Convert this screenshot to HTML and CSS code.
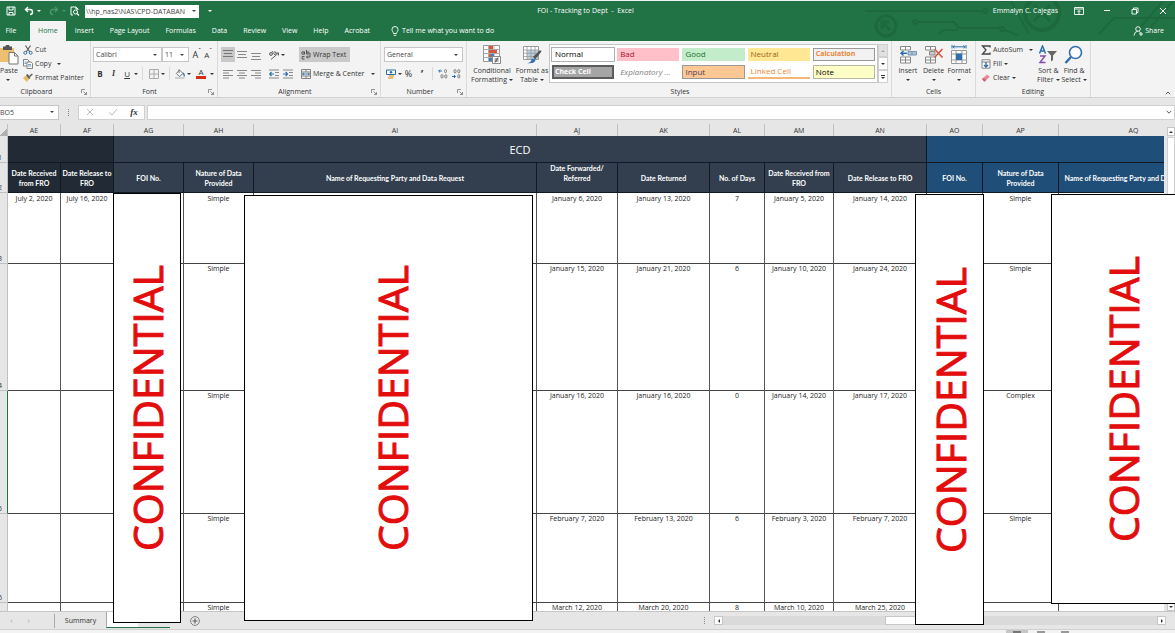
FILE: index.html
```html
<!DOCTYPE html>
<html lang="en">
<head>
    <meta charset="utf-8">
    <title>FOI - Tracking to Dept - Excel</title>
    <link rel="stylesheet" href="styles.css">
</head>
<body>
    <!-- icon set -->
    <svg class="defs" width="0" height="0">
        <symbol id="save" viewBox="0 0 10 10"><path d="M1 1h8v8H1z M3 1v3h4V1 M3 9V6.500h4V9" fill="none" stroke="#fff"/></symbol>
        <symbol id="undo" viewBox="0 0 10 10"><path d="M4 1L1.500 3.500 4 6 M2 3.500h4a2.500 2.500 0 0 1 0 5" fill="none" stroke="currentColor" stroke-width="1.400"/></symbol>
        <symbol id="redo" viewBox="0 0 10 10"><path d="M6 1l2.500 2.500L6 6 M8 3.500H4a2.500 2.500 0 0 0 0 5" fill="none" stroke="currentColor" stroke-width="1.400"/></symbol>
        <symbol id="preview" viewBox="0 0 10 10"><path d="M3 9H1V1h5l2 2v1 M6 1v2h2" fill="none" stroke="#fff"/><circle cx="5.500" cy="6" r="2" fill="none" stroke="#fff"/><path d="M7 7.500L9 9.500" stroke="#fff" stroke-width="1.300"/></symbol>
        <symbol id="launcher" viewBox="0 0 6 6"><path d="M.5 4V.5H4 M2.500 2.500l3 3 M5.500 3v2.500H3" fill="none" stroke="#777" stroke-width=".8"/></symbol>
        <symbol id="paste" viewBox="0 0 20 20"><path d="M0 3h14v14H0z" fill="#ecc06e"/><path d="M3 1.500h2.500a2 2 0 0 1 4 0H12V5H3z" fill="#555"/><path d="M9 7.500h5.500L18 11v8H9z" fill="#fff" stroke="#777"/><path d="M14.500 7.500V11H18" fill="none" stroke="#777"/></symbol>
        <symbol id="cut" viewBox="0 0 10 10"><path d="M2.500.5L6.800 7 M7.500.5L3.200 7" stroke="#555" stroke-width="1.100"/><circle cx="2.300" cy="7.800" r="1.500" fill="none" stroke="#3b78ad"/><circle cx="7.700" cy="7.800" r="1.500" fill="none" stroke="#3b78ad"/></symbol>
        <symbol id="copy" viewBox="0 0 10 10"><path d="M.5.5h4L6 2v5H.5z" fill="#fff" stroke="#666" stroke-width=".8"/><path d="M4 3h4l1.500 1.500v5H4z" fill="#fff" stroke="#666" stroke-width=".8"/><path d="M5 5.500h3M5 7h3.500M1.500 3h2M1.500 4.500h2" stroke="#3b78ad" stroke-width=".7"/></symbol>
        <symbol id="brush" viewBox="0 0 10 10"><path d="M0 5l3-2.500L6 6 4 9z" fill="#eab85f"/><path d="M3 2l1.500-1L7.500 5 6 6z" fill="#555"/><path d="M6 3L9 .5l.8 1L7 4z" fill="#555"/></symbol>
        <symbol id="grid" viewBox="0 0 10 10"><path d="M.5.5h9v9h-9zM5 .5v9M.5 5h9" fill="none" stroke="#aaa"/></symbol>
        <symbol id="bucket" viewBox="0 0 10 10"><path d="M4.500 1L8 4.500 4.500 7.500 1.300 4.500zM4 .3v4" fill="#fff" stroke="#666" stroke-width=".9"/><path d="M8 4q2 2 .8 3.500" fill="none" stroke="#3b78ad" stroke-width="1.300"/><path d="M0 9h9.500" stroke="#ccc" stroke-width="1.800"/></symbol>
        <symbol id="lines-top" viewBox="0 0 10 10"><path d="M0 .5h10M1 3.500h8M0 6.500h10" stroke="#777" fill="none"/></symbol>
        <symbol id="lines-mid" viewBox="0 0 10 10"><path d="M0 1.500h10M1 4.500h8M0 7.500h10" stroke="#888" fill="none"/></symbol>
        <symbol id="lines-bot" viewBox="0 0 10 10"><path d="M0 3.500h10M1 6.500h8M0 9.500h10" stroke="#888" fill="none"/></symbol>
        <symbol id="al-left" viewBox="0 0 10 10"><path d="M0 1.500h10M0 4h6M0 6.500h10M0 9h6" stroke="#888"/></symbol>
        <symbol id="al-center" viewBox="0 0 10 10"><path d="M0 1.500h10M2 4h6M0 6.500h10M2 9h6" stroke="#888"/></symbol>
        <symbol id="al-right" viewBox="0 0 10 10"><path d="M0 1.500h10M4 4h6M0 6.500h10M4 9h6" stroke="#888"/></symbol>
        <symbol id="orient" viewBox="0 0 10 10"><circle cx="2" cy="4" r="1.400" fill="none" stroke="#555"/><path d="M3 1l3 4M5 2q2-1 2 1.500L5.500 5M2 9.500L9.500 3M7 3h2.500v2.500" fill="none" stroke="#555" stroke-width=".9"/></symbol>
        <symbol id="outdent" viewBox="0 0 10 10"><path d="M0 1h10M6 3.500h4M6 6.500h4M0 9h10" stroke="#888"/><path d="M5 5H1M2.500 3L.7 5l1.800 2" fill="none" stroke="#2b6cab" stroke-width="1.200"/></symbol>
        <symbol id="indent" viewBox="0 0 10 10"><path d="M0 1h10M6 3.500h4M6 6.500h4M0 9h10" stroke="#888"/><path d="M0 5h4M2.700 3l1.800 2-1.800 2" fill="none" stroke="#2b6cab" stroke-width="1.200"/></symbol>
        <symbol id="wrap" viewBox="0 0 10 10"><circle cx="2" cy="3" r="1.300" fill="none" stroke="#555"/><path d="M3.500 1.500v3M5.500 0v4.300M3.500 6.500H1.200v2.500h2.300M9 3v4H5.500M7 5.500L5.500 7 7 8.500" fill="none" stroke="#555"/><circle cx="7" cy="3" r="1.200" fill="none" stroke="#555"/></symbol>
        <symbol id="merge" viewBox="0 0 10 10"><path d="M.5.5h9v9h-9zM.5 3h9M.5 7h9M5 .5V3M5 7v2.500" fill="none" stroke="#777" stroke-width=".9"/><path d="M1.500 5h7M3 4L1.500 5 3 6M7 4l1.500 1L7 6" fill="none" stroke="#2b6cab" stroke-width=".9"/></symbol>
        <symbol id="money" viewBox="0 0 10 10"><path d="M.5 1h9v4.500h-9z" fill="#fff" stroke="#2b6cab"/><circle cx="5" cy="3.200" r="1.200" fill="#2b6cab"/><path d="M3 7h5M2 9h5" stroke="#e4b050" stroke-width="1.600"/></symbol>
        <symbol id="dec-inc" viewBox="0 0 10 10"><path d="M4 2H.8M2 .6L.6 2 2 3.400" fill="none" stroke="#2b6cab"/><rect x="6.500" y=".6" width="2" height="3" rx="1" fill="none" stroke="#666" stroke-width=".8"/><rect x="3" y="5.700" width="2" height="3.300" rx="1" fill="none" stroke="#666" stroke-width=".8"/><rect x="6.800" y="5.700" width="2" height="3.300" rx="1" fill="none" stroke="#666" stroke-width=".8"/></symbol>
        <symbol id="dec-dec" viewBox="0 0 10 10"><path d="M1 7.500h3.500M3 6l1.500 1.500L3 9" fill="none" stroke="#2b6cab"/><rect x="3" y=".6" width="2" height="3.300" rx="1" fill="none" stroke="#666" stroke-width=".8"/><rect x="6.800" y=".6" width="2" height="3.300" rx="1" fill="none" stroke="#666" stroke-width=".8"/><rect x="6.800" y="5.700" width="2" height="3.300" rx="1" fill="none" stroke="#666" stroke-width=".8"/></symbol>
        <symbol id="cond" viewBox="0 0 20 20"><path d="M1.500.5h16v16h-16z" fill="#fff" stroke="#999"/><path d="M1.500 4.500h16M1.500 8.500h16M1.500 12.500h16M6.500.5v16M12 .5v16" stroke="#aaa" fill="none"/><path d="M7 1h4v3H7zM7 9h2v3H7z" fill="#d7553a"/><path d="M7 5h8v3H7z" fill="#d7553a"/><path d="M9 9h3v3H9zM7 13h3v3H7z" fill="#3f7fc0"/><path d="M10.500 11.500h8v7h-8z" fill="#fff" stroke="#888"/><path d="M12.500 14h4M12.500 16h4M16 12.500l-3 5" stroke="#444" fill="none" stroke-width=".9"/></symbol>
        <symbol id="fmt-table" viewBox="0 0 20 20"><path d="M1.500 1.500h15v13h-15z" fill="#fff" stroke="#999"/><path d="M5 5h11v9H5z" fill="#b9cfe4"/><path d="M1.500 5h15M1.500 8.300h15M1.500 11.500h15M5 1.500v13M9 1.500v13M13 1.500v13" stroke="#999" fill="none" stroke-width=".8"/><path d="M11 12l7-7 1.500 1.500-6.500 8z" fill="#555"/><path d="M5 18q4 0 5-4.500l3.500 1.500q-1 4-8.500 3z" fill="#2f6fae"/></symbol>
        <symbol id="ins-cells" viewBox="0 0 20 20"><path d="M2.500 1.500h10v3.500h-10zM7.500 1.500V5M2.500 12h10v6h-10zM2.500 15h10M7.500 12v6" fill="#fff" stroke="#888"/><path d="M10 6.500h8.500v3.500H10zM14 6.500V10" fill="#a9c3dc" stroke="#7a96b0"/><path d="M9 8.300H3M5.500 6L3 8.300l2.500 2.200" fill="none" stroke="#2b6cab" stroke-width="1.400"/></symbol>
        <symbol id="del-cells" viewBox="0 0 20 20"><path d="M1.500 1.500h10v3.500h-10zM6.500 1.500V5M1.500 12h10v6h-10zM1.500 15h10M6.500 12v6" fill="#fff" stroke="#888"/><path d="M5.500 6.500H11V10H5.500z" fill="#ccc" stroke="#888"/><path d="M10.500 4l8 8.500M18.500 4l-8 8.500" stroke="#d4553f" stroke-width="1.600"/></symbol>
        <symbol id="fmt-cells" viewBox="0 0 20 20"><path d="M3 0v3.500M17 0v3.500M4 1.800h12M5.500.3L4 1.800l1.500 1.500M14.500.3L16 1.800l-1.500 1.500" fill="none" stroke="#2b6cab"/><path d="M2.500 5.500h15v13h-15zM2.500 9h15M2.500 15h15M7 5.500v13M13 5.500v13" fill="#fff" stroke="#999"/><path d="M7 8.500h6V15H7z" fill="#2f6fae"/></symbol>
        <symbol id="sigma" viewBox="0 0 10 10"><path d="M9 2.500V1H1.500L5 5 1.500 9H9V7.500" fill="none" stroke="#444" stroke-width="1.300"/></symbol>
        <symbol id="fill" viewBox="0 0 10 10"><path d="M1 .8h8v8.400H1zM1 3h8" fill="#fff" stroke="#777" stroke-width=".9"/><path d="M5 3v5M3 6l2 2 2-2" fill="none" stroke="#2b6cab" stroke-width="1.300"/></symbol>
        <symbol id="eraser" viewBox="0 0 10 10"><path d="M1 6l5-4.500 2.800 2.300-5 4.700H3z" fill="#e8899a"/><path d="M1 6l1.500-1.300 2.800 2.400L3.800 8.500H3z" fill="#d0657c"/></symbol>
        <symbol id="sort" viewBox="0 0 20 20"><path d="M1.500 8.500L4.500 1l3 7.500M2.500 6h4" fill="none" stroke="#2f6fae" stroke-width="1.500"/><path d="M2 11h5l-5 6.500h5.500" fill="none" stroke="#8a4fae" stroke-width="1.500"/><path d="M9 6h10l-4 4.500V15l-2 1.500v-6z" fill="#666"/></symbol>
        <symbol id="find" viewBox="0 0 20 20"><circle cx="11.500" cy="7.500" r="6" fill="#fff" stroke="#2f6fae" stroke-width="1.600"/><path d="M7 12l-5.500 6" stroke="#2f6fae" stroke-width="2.400"/></symbol>
        <symbol id="bulb" viewBox="0 0 10 10"><path d="M3.500 7.500C3.500 6 2 5.500 2 3.500a3 3 0 0 1 6 0C8 5.500 6.500 6 6.500 7.500zM3.700 9.300h2.600" fill="none" stroke="#fff" stroke-width=".9"/></symbol>
        <symbol id="person" viewBox="0 0 10 10"><circle cx="5" cy="3" r="2.300" fill="none" stroke="#fff" stroke-width=".9"/><path d="M1 9.500q.5-4 3.500-4.300M6 5.500l1.500 1M6 8h4M8 6v4" fill="none" stroke="#fff" stroke-width=".9"/></symbol>
        <symbol id="ribbon-opt" viewBox="0 0 10 10"><path d="M.5 1.500h9v7h-9zM.5 3h9M5 8V4.500M3.500 6L5 4.500 6.500 6" fill="none" stroke="#fff" stroke-width=".9"/></symbol>
        <symbol id="minimize" viewBox="0 0 10 10"><path d="M2 4.500h6" stroke="#fff"/></symbol>
        <symbol id="restore" viewBox="0 0 10 10"><path d="M2 3.500h4.500V8H2zM3.500 3.500V2H8v4.500H6.500" fill="none" stroke="#fff" stroke-width=".9"/></symbol>
        <symbol id="close" viewBox="0 0 10 10"><path d="M2 2l6 6M8 2L2 8" stroke="#fff"/></symbol>
        <symbol id="cancel" viewBox="0 0 10 10"><path d="M2 2l6 6M8 2L2 8" stroke="#bbb"/></symbol>
        <symbol id="check" viewBox="0 0 10 10"><path d="M1 5.500L4 8l5-6" fill="none" stroke="#bbb"/></symbol>
        <symbol id="up" viewBox="0 0 6 6"><path d="M.8 4.200L3 2l2.200 2.200" fill="none" stroke="#555"/></symbol>
        <symbol id="down" viewBox="0 0 6 6"><path d="M.8 2L3 4.200 5.200 2" fill="none" stroke="#555"/></symbol>
        <symbol id="plus" viewBox="0 0 10 10"><circle cx="5" cy="5" r="4.400" fill="none" stroke="#777" stroke-width=".9"/><path d="M5 2.500v5M2.500 5h5" stroke="#666" stroke-width="1.200"/></symbol>
    </svg>

    <header class="title-area">
        <svg class="circuit" width="310" height="41" viewBox="0 0 310 41">
            <g fill="none" stroke="#1d693d" stroke-width="2">
                <circle cx="21" cy="25" r="10" stroke-width="3"/><path d="M25 29l-7-7M17 28v-7h7" stroke-width="3"/>
                <path d="M0 10h113l5 1"/><circle cx="120" cy="10" r="2"/><circle cx="50" cy="21" r="2"/><path d="M53 21h36l5 6h42"/><circle cx="137" cy="28" r="2"/>
                <path d="M74 33l4-4h15M139 29l14 5M134 0h12l18 33"/><circle cx="177" cy="12" r="17" stroke-width="4"/><path d="M169 4l16 16M185 4l-16 16" stroke-width="3"/>
                <path d="M234 33l15-16h61M274 28L298 0M284 28L308 0"/>
            </g>
        </svg>
        <div class="title-bar">
            <div class="quick-access">
                <button aria-label="Save"><svg class="ico"><use href="#save"/></svg></button>
                <button class="undo" aria-label="Undo"><svg class="ico"><use href="#undo"/></svg><i class="arrow"></i></button>
                <button class="redo" aria-label="Redo"><svg class="ico"><use href="#redo"/></svg><i class="arrow"></i></button>
                <button aria-label="Print preview"><svg class="ico"><use href="#preview"/></svg></button>
                <div class="combo path"><select aria-label="Document location"><option>\\hp_nas2\NAS\CPD-DATABAN</option></select><i class="arrow"></i></div>
                <button class="customize" aria-label="Customize toolbar"><i class="arrow"></i></button>
            </div>
            <div class="doc-title">FOI - Tracking to Dept &nbsp;-&nbsp; Excel</div>
            <div class="window-buttons">
                <span>Emmalyn C. Cajegas</span>
                <button aria-label="Ribbon display options"><svg class="ico"><use href="#ribbon-opt"/></svg></button>
                <button aria-label="Minimize"><svg class="ico"><use href="#minimize"/></svg></button>
                <button aria-label="Restore"><svg class="ico"><use href="#restore"/></svg></button>
                <button aria-label="Close"><svg class="ico"><use href="#close"/></svg></button>
            </div>
        </div>
        <nav class="tabs">
            <button class="file">File</button>
            <button class="active">Home</button>
            <button>Insert</button>
            <button>Page Layout</button>
            <button>Formulas</button>
            <button>Data</button>
            <button>Review</button>
            <button>View</button>
            <button>Help</button>
            <button>Acrobat</button>
            <button class="tell-me"><svg class="ico"><use href="#bulb"/></svg>Tell me what you want to do</button>
            <button class="share"><svg class="ico"><use href="#person"/></svg>Share</button>
        </nav>
    </header>

    <section class="ribbon">
        <div class="group clipboard">
            <div class="group-body">
                <button class="big"><svg class="ico-big"><use href="#paste"/></svg>Paste<i class="arrow"></i></button>
                <div class="stack">
                    <button><svg class="ico"><use href="#cut"/></svg>Cut</button>
                    <button><svg class="ico"><use href="#copy"/></svg>Copy<i class="arrow wide"></i></button>
                    <button><svg class="ico"><use href="#brush"/></svg>Format Painter</button>
                </div>
            </div>
            <div class="group-label">Clipboard<svg class="launcher"><use href="#launcher"/></svg></div>
        </div>
        <div class="group font">
            <div class="group-body rows">
                <div class="row">
                    <div class="combos">
                        <div class="combo family"><select aria-label="Font"><option>Calibri</option></select><i class="arrow"></i></div>
                        <div class="combo size"><select aria-label="Font size"><option>11</option></select><i class="arrow"></i></div>
                    </div>
                    <button class="tool grow" aria-label="Increase font size">A<sup>ˆ</sup></button>
                    <button class="tool shrink" aria-label="Decrease font size">A<sup>ˇ</sup></button>
                </div>
                <div class="row">
                    <button class="tool bold">B</button>
                    <button class="tool italic">I</button>
                    <button class="tool underline"><u>U</u></button>
                    <i class="arrow"></i>
                    <span class="sep"></span>
                    <button class="tool" aria-label="Borders"><svg class="ico"><use href="#grid"/></svg></button>
                    <i class="arrow"></i>
                    <span class="sep"></span>
                    <button class="tool" aria-label="Fill color"><svg class="ico"><use href="#bucket"/></svg></button>
                    <i class="arrow"></i>
                    <button class="tool font-color">A</button>
                    <i class="arrow"></i>
                </div>
            </div>
            <div class="group-label">Font<svg class="launcher"><use href="#launcher"/></svg></div>
        </div>
        <div class="group alignment">
            <div class="group-body">
                <div class="rows">
                    <div class="row">
                        <button class="tool pressed" aria-label="Top align"><svg class="ico"><use href="#lines-top"/></svg></button>
                        <button class="tool" aria-label="Middle align"><svg class="ico"><use href="#lines-mid"/></svg></button>
                        <button class="tool" aria-label="Bottom align"><svg class="ico"><use href="#lines-bot"/></svg></button>
                    </div>
                    <div class="row">
                        <button class="tool" aria-label="Align left"><svg class="ico"><use href="#al-left"/></svg></button>
                        <button class="tool" aria-label="Center"><svg class="ico"><use href="#al-center"/></svg></button>
                        <button class="tool" aria-label="Align right"><svg class="ico"><use href="#al-right"/></svg></button>
                    </div>
                </div>
                <span class="divider"></span>
                <div class="rows">
                    <div class="row">
                        <button class="tool" aria-label="Orientation"><svg class="ico"><use href="#orient"/></svg></button>
                        <i class="arrow"></i>
                    </div>
                    <div class="row">
                        <button class="tool" aria-label="Decrease indent"><svg class="ico"><use href="#outdent"/></svg></button>
                        <button class="tool" aria-label="Increase indent"><svg class="ico"><use href="#indent"/></svg></button>
                    </div>
                </div>
                <span class="divider"></span>
                <div class="rows">
                    <div class="row"><button class="labelled pressed"><svg class="ico"><use href="#wrap"/></svg>Wrap Text</button></div>
                    <div class="row"><button class="labelled"><svg class="ico"><use href="#merge"/></svg>Merge &amp; Center<i class="arrow"></i></button></div>
                </div>
            </div>
            <div class="group-label">Alignment<svg class="launcher"><use href="#launcher"/></svg></div>
        </div>
        <div class="group number">
            <div class="group-body rows">
                <div class="row">
                    <div class="combo format"><select aria-label="Number format"><option>General</option></select><i class="arrow"></i></div>
                </div>
                <div class="row">
                    <button class="tool" aria-label="Accounting format"><svg class="ico"><use href="#money"/></svg></button>
                    <i class="arrow"></i>
                    <button class="tool percent">%</button>
                    <button class="tool comma">’</button>
                    <span class="sep"></span>
                    <button class="tool" aria-label="Increase decimal"><svg class="ico"><use href="#dec-inc"/></svg></button>
                    <button class="tool" aria-label="Decrease decimal"><svg class="ico"><use href="#dec-dec"/></svg></button>
                </div>
            </div>
            <div class="group-label">Number<svg class="launcher"><use href="#launcher"/></svg></div>
        </div>
        <div class="group styles">
            <div class="group-body">
                <button class="big wide"><svg class="ico-big"><use href="#cond"/></svg>Conditional<span>Formatting<i class="arrow"></i></span></button>
                <button class="big wide"><svg class="ico-big"><use href="#fmt-table"/></svg>Format as<span>Table<i class="arrow"></i></span></button>
                <div class="gallery">
                    <button class="st normal">Normal</button>
                    <button class="st bad">Bad</button>
                    <button class="st good">Good</button>
                    <button class="st neutral">Neutral</button>
                    <button class="st calc">Calculation</button>
                    <button class="st check">Check Cell</button>
                    <button class="st explain">Explanatory ...</button>
                    <button class="st input">Input</button>
                    <button class="st linked">Linked Cell</button>
                    <button class="st note">Note</button>
                </div>
                <div class="gallery-scroll">
                    <button class="off" aria-label="Previous styles"><i class="arrow up"></i></button>
                    <button aria-label="Next styles"><i class="arrow"></i></button>
                    <button class="more" aria-label="More styles"><i class="arrow"></i></button>
                </div>
            </div>
            <div class="group-label">Styles</div>
        </div>
        <div class="group cells">
            <div class="group-body">
                <button class="big"><svg class="ico-big"><use href="#ins-cells"/></svg>Insert<i class="arrow"></i></button>
                <button class="big"><svg class="ico-big"><use href="#del-cells"/></svg>Delete<i class="arrow"></i></button>
                <button class="big"><svg class="ico-big"><use href="#fmt-cells"/></svg>Format<i class="arrow"></i></button>
            </div>
            <div class="group-label">Cells</div>
        </div>
        <div class="group editing">
            <div class="group-body">
                <div class="stack">
                    <button><svg class="ico"><use href="#sigma"/></svg>AutoSum<i class="arrow wide"></i></button>
                    <button><svg class="ico"><use href="#fill"/></svg>Fill<i class="arrow"></i></button>
                    <button><svg class="ico"><use href="#eraser"/></svg>Clear<i class="arrow"></i></button>
                </div>
                <button class="big"><svg class="ico-big"><use href="#sort"/></svg>Sort &amp;<span>Filter<i class="arrow"></i></span></button>
                <button class="big"><svg class="ico-big"><use href="#find"/></svg>Find &amp;<span>Select<i class="arrow"></i></span></button>
            </div>
            <div class="group-label">Editing</div>
        </div>
        <button class="collapse" aria-label="Collapse ribbon"><svg class="chev"><use href="#up"/></svg></button>
    </section>

    <section class="formula-bar">
        <div class="combo name-box"><input type="text" value="BO5" aria-label="Name box"><i class="arrow"></i></div>
        <span class="dots"></span>
        <div class="formula-tools">
            <button aria-label="Cancel"><svg class="ico"><use href="#cancel"/></svg></button>
            <button aria-label="Enter"><svg class="ico"><use href="#check"/></svg></button>
            <button class="fx">fx</button>
        </div>
        <div class="formula"><input type="text" aria-label="Formula"><svg class="chev"><use href="#down"/></svg></div>
    </section>

    <main class="workspace">
        <div class="sheet">
            <table>
                <colgroup>
                    <col class="c-row"><col class="c-ae"><col class="c-ae"><col class="c-ag"><col class="c-ag"><col class="c-ai"><col class="c-aj"><col class="c-ak"><col class="c-al"><col class="c-am"><col class="c-an"><col class="c-ao"><col class="c-ap"><col class="c-aq">
                </colgroup>
                <thead>
                    <tr class="letters"><th class="corner"></th><th>AE</th><th>AF</th><th>AG</th><th>AH</th><th>AI</th><th>AJ</th><th>AK</th><th>AL</th><th>AM</th><th>AN</th><th>AO</th><th>AP</th><th>AQ</th></tr>
                </thead>
                <tbody>
                    <tr class="r1">
                        <th>1</th>
                        <td class="dark" colspan="2"></td>
                        <td class="slate" colspan="8">ECD</td>
                        <td class="blue" colspan="3"></td>
                    </tr>
                    <tr class="r2">
                        <th>2</th>
                        <td class="dark">Date Received from FRO</td>
                        <td class="dark">Date Release to FRO</td>
                        <td class="slate">FOI No.</td>
                        <td class="slate">Nature of Data Provided</td>
                        <td class="slate">Name of Requesting Party and Data Request</td>
                        <td class="slate top">Date Forwarded/ Referred</td>
                        <td class="slate">Date Returned</td>
                        <td class="slate">No. of Days</td>
                        <td class="slate">Date Received from FRO</td>
                        <td class="slate">Date Release to FRO</td>
                        <td class="blue">FOI No.</td>
                        <td class="blue">Nature of Data Provided</td>
                        <td class="blue">Name of Requesting Party and Data Request</td>
                    </tr>
                    <tr class="r3"><th>3</th><td>July 2, 2020</td><td>July 16, 2020</td><td></td><td>Simple</td><td></td><td>January 6, 2020</td><td>January 13, 2020</td><td>7</td><td>January 5, 2020</td><td>January 14, 2020</td><td></td><td>Simple</td><td></td></tr>
                    <tr class="r4"><th>4</th><td></td><td></td><td></td><td>Simple</td><td></td><td>January 15, 2020</td><td>January 21, 2020</td><td>6</td><td>January 10, 2020</td><td>January 24, 2020</td><td></td><td>Simple</td><td></td></tr>
                    <tr class="r5"><th>5</th><td></td><td></td><td></td><td>Simple</td><td></td><td>January 16, 2020</td><td>January 16, 2020</td><td>0</td><td>January 14, 2020</td><td>January 17, 2020</td><td></td><td>Complex</td><td></td></tr>
                    <tr class="r6"><th>6</th><td></td><td></td><td></td><td>Simple</td><td></td><td>February 7, 2020</td><td>February 13, 2020</td><td>6</td><td>February 3, 2020</td><td>February 7, 2020</td><td></td><td>Simple</td><td></td></tr>
                    <tr class="r7"><th></th><td></td><td></td><td></td><td>Simple</td><td></td><td>March 12, 2020</td><td>March 20, 2020</td><td>8</td><td>March 10, 2020</td><td>March 25, 2020</td><td></td><td></td><td></td></tr>
                </tbody>
            </table>
        </div>
        <div class="v-scroll">
            <button aria-label="Scroll up"><i class="arrow up"></i></button>
            <div class="v-thumb"></div>
            <button aria-label="Scroll down"><i class="arrow"></i></button>
        </div>

        <!-- boxes drawn over the private columns -->
        <div class="cover cover-ag"><span>CONFIDENTIAL</span></div>
        <div class="cover cover-ai"><span>CONFIDENTIAL</span></div>
        <div class="cover cover-ao"><span>CONFIDENTIAL</span></div>
        <div class="cover cover-aq"><span>CONFIDENTIAL</span></div>
    </main>

    <footer>
        <div class="sheet-tabs">
            <button class="nav" aria-label="Previous sheet">‹</button>
            <button class="nav" aria-label="Next sheet">›</button>
            <button class="tab">Summary</button>
            <button class="tab current" aria-label="Current sheet"></button>
            <button class="add" aria-label="New sheet"><svg class="ico"><use href="#plus"/></svg></button>
            <span class="dots"></span>
            <div class="h-scroll">
                <button aria-label="Scroll left"><i class="arrow left"></i></button>
                <div class="h-track"><div class="h-thumb"></div></div>
                <button aria-label="Scroll right"><i class="arrow right"></i></button>
            </div>
        </div>
        <div class="status-bar">
            <span class="view on"></span>
            <span class="view"></span>
            <span class="view"></span>
        </div>
    </footer>
</body>
</html>
```

FILE: styles.css
```css
* {
    box-sizing: border-box;
}
body {
    margin: 0;
    height: 100vh;
    display: flex;
    flex-direction: column;
    overflow: hidden;
    background: #e6e6e6;
    color: #333;
    font: 7px/10px "Open Sans", "Noto Sans", sans-serif;
}
button, input, select {
    font: inherit;
    color: inherit;
    background: none;
    border: 0;
    margin: 0;
    padding: 0;
}
button {
    display: flex;
    align-items: center;
    justify-content: center;
    white-space: nowrap;
}
svg {
    display: block;
    flex: none;
}
.defs {
    position: absolute;
}
.ico {
    width: 10px;
    height: 10px;
}
.ico-big {
    width: 20px;
    height: 20px;
}
.chev {
    width: 6px;
    height: 6px;
}
.arrow {
    flex: none;
    width: 0;
    height: 0;
    border: 2px solid transparent;
    border-top-color: currentColor;
    border-bottom-width: 0;
}
.arrow.up {
    border: 2px solid transparent;
    border-bottom-color: currentColor;
    border-top-width: 0;
}
.arrow.left {
    border: 2px solid transparent;
    border-right-color: currentColor;
    border-left-width: 0;
}
.arrow.right {
    border: 2px solid transparent;
    border-left-color: currentColor;
    border-right-width: 0;
}

/* title and tabs */
.title-area {
    position: relative;
    flex: none;
    background: #217346;
    color: #fff;
    border-top: 1px solid #f3f3f3;
}
.circuit {
    position: absolute;
    right: 0;
    top: 0;
}
.title-bar {
    position: relative;
    display: grid;
    grid-template-columns: 1fr auto 1fr;
    align-items: center;
    height: 20px;
}
.doc-title {
    padding-right: 4px;
}
.quick-access {
    display: flex;
    align-items: center;
    padding-left: 6px;
}
.quick-access button {
    gap: 3px;
    margin-right: 8px;
}
.quick-access .redo {
    color: #4f9470;
    margin-right: 4px;
}
.quick-access .combo {
    margin-left: -3px;
}
.combo {
    display: flex;
    align-items: center;
    height: 15px;
    padding-right: 4px;
    background: #fff;
    border: 1px solid #c6c6c6;
    color: #444;
}
.combo select, .combo input {
    appearance: none;
    flex: 1;
    min-width: 0;
    height: 13px;
    padding-left: 2px;
    line-height: 13px;
    outline: none;
}
.combo.path {
    width: 114px;
    height: 13px;
    padding-right: 2px;
    border-color: #fff;
}
.combo.path select {
    padding-left: 0;
}
.quick-access .customize {
    margin-left: 9px;
}
.window-buttons {
    display: flex;
    align-items: center;
    justify-content: flex-end;
    gap: 18px;
    padding-right: 7px;
}
.window-buttons span {
    margin-right: -2px;
}
.tabs {
    position: relative;
    display: flex;
    height: 20px;
}
.tabs button {
    padding: 0 8px;
}
.tabs .file {
    width: 30px;
    padding: 0 8px 0 0;
}
.tabs .active {
    background: #f3f3f3;
    color: #217346;
    margin-right: 1px;
}
.tabs .tell-me {
    gap: 2px;
    padding-left: 12px;
}
.tabs .share {
    gap: 2px;
    margin-left: auto;
    padding-right: 11px;
}

/* ribbon */
.ribbon {
    display: flex;
    flex: none;
    position: relative;
    height: 57px;
    background: #f3f3f3;
    border-bottom: 1px solid #d2d2d2;
}
.group {
    display: flex;
    flex-direction: column;
    padding: 3px 3px 0;
    border-right: 1px solid #dadada;
}
.group-body {
    display: flex;
    height: 44px;
}
.group-label {
    position: relative;
    text-align: center;
}
.launcher {
    position: absolute;
    right: 0;
    top: 2px;
    width: 6px;
    height: 6px;
}
.clipboard {
    width: 91px;
    padding-left: 0;
}
.clipboard .group-label {
    padding-right: 14px;
}
.font {
    width: 127px;
    padding-left: 2px;
}
.font .group-label, .alignment .group-label {
    padding-right: 8px;
}
.number .group-label {
    padding-right: 7px;
}
.alignment {
    width: 163px;
}
.number {
    width: 86px;
}
.styles {
    width: 425px;
    padding-left: 5px;
}
.cells {
    width: 84px;
}
.editing {
    width: 115px;
}
.big {
    flex-direction: column;
    justify-content: flex-start;
    width: 26px;
    padding-top: 1px;
    line-height: 9px;
}
.clipboard .big {
    align-items: flex-start;
    width: 19px;
}
.big .ico-big {
    margin-bottom: 1px;
}
.big > .arrow {
    margin: 4px 6px 0;
}
.big span {
    display: flex;
    align-items: center;
    gap: 2px;
}
.big.wide {
    width: 40px;
}
.editing .big {
    width: 27px;
}
.stack {
    display: flex;
    flex-direction: column;
    padding-left: 4px;
}
.clipboard .stack, .editing .stack {
    margin-top: -1px;
}
.stack button {
    justify-content: flex-start;
    height: 14px;
    gap: 2px;
}
.stack .wide {
    margin-left: 4px;
}
.editing .stack {
    width: 59px;
    padding-left: 2px;
}
.rows {
    display: flex;
    flex-direction: column;
    gap: 4px;
    padding-top: 3px;
}
.row {
    display: flex;
    align-items: center;
    height: 15px;
}
.combos {
    display: flex;
    margin-right: 2px;
}
.combo.family {
    width: 69px;
}
.combo.size {
    width: 27px;
}
.combo.format {
    width: 81px;
}
.tool {
    width: 14px;
    height: 15px;
    font-size: 8px;
}
.grow {
    font-size: 9px;
}
.tool sup {
    font-size: 7px;
    line-height: 7px;
    align-self: flex-start;
}
.bold {
    font-weight: bold;
}
.italic {
    font-style: italic;
    font-family: "Liberation Serif", serif;
    font-weight: bold;
}
.font-color {
    height: 11px;
    border-bottom: 3px solid #d62c1a;
    width: 10px;
    margin: 0 4px 0 5px;
}
.font .sep {
    margin: 0 4px;
}
.sep, .divider {
    width: 1px;
    height: 13px;
    background: #dadada;
}
.number .sep {
    margin: 0 3px;
}
.divider {
    height: 32px;
    margin: 3px 2px 0;
}
.pressed {
    background: #c9c9c9;
}
.labelled {
    gap: 2px;
    height: 15px;
    padding: 0 4px 0 2px;
}
.labelled .arrow {
    margin-left: 5px;
}
.percent {
    font-size: 9px;
}
.comma {
    font-size: 10px;
    font-weight: bold;
}
.gallery {
    flex: 1;
    display: grid;
    grid-template-columns: repeat(5, 1fr);
    gap: 4px 3px;
    height: 39px;
    margin-left: -3px;
    padding: 3px 2px;
    background: #fff;
    border: 1px solid #c6c6c6;
}
.st {
    justify-content: flex-start;
    padding-left: 3px;
    color: #000;
    font-size: 8px;
    overflow: hidden;
}
.normal {
    outline: 1px solid #b0b0b0;
}
.bad {
    background: #ffc0c9;
    color: #a3182b;
}
.good {
    background: #c3ecca;
    color: #1b7030;
}
.neutral {
    background: #ffe793;
    color: #96681a;
}
.calc {
    background: #f2f2f2;
    border: 1px solid #999;
    padding-left: 2px;
    color: #ee8535;
    font-size: 7px;
    font-weight: bold;
}
.check {
    background: #a5a5a5;
    border: 2px solid #5c5c5c;
    padding-left: 1px;
    color: #fff;
    font-size: 7px;
    font-weight: bold;
}
.explain {
    color: #7f7f7f;
    font-style: italic;
}
.input {
    background: #ffc793;
    border: 1px solid #999;
    padding-left: 2px;
    color: #4b4160;
}
.linked {
    border-bottom: 2px solid #f5b67a;
    color: #ee8535;
}
.note {
    background: #ffffc8;
    border: 1px solid #b8b8a0;
    padding-left: 2px;
}
.gallery-scroll {
    display: flex;
    flex-direction: column;
    width: 10px;
    height: 39px;
}
.gallery-scroll button {
    flex: 1;
    background: #fff;
    border: 1px solid #d0d0d0;
}
.gallery-scroll .off {
    background: #e0e0e0;
    color: #aaa;
}
.gallery-scroll .more {
    flex-direction: column;
    gap: 1px;
}
.more::before {
    content: "";
    width: 4px;
    height: 1px;
    background: currentColor;
}
.collapse {
    position: absolute;
    right: 4px;
    bottom: 1px;
}

/* formula bar */
.formula-bar {
    display: flex;
    align-items: center;
    flex: none;
    height: 26px;
    padding-top: 2px;
}
.name-box {
    width: 59px;
    border-left: 0;
}
.name-box input {
    padding-left: 0;
}
.dots {
    height: 7px;
    margin: 0 9px;
    border-left: 1px dotted #888;
}
.formula-tools {
    display: flex;
    align-items: center;
    justify-content: space-around;
    width: 67px;
    height: 15px;
    margin-right: 2px;
    background: #fff;
    border: 1px solid #d0d0d0;
}
.fx {
    font: italic bold 9px/10px "Liberation Serif", serif;
}
.formula {
    flex: 1;
    display: flex;
    align-items: center;
    height: 15px;
    padding-right: 2px;
    background: #fff;
    border: 1px solid #d0d0d0;
}
.formula input {
    flex: 1;
}

/* worksheet */
.workspace {
    position: relative;
    flex: 1;
    min-height: 0;
    display: flex;
}
.sheet {
    flex: 1;
    min-width: 0;
    overflow: hidden;
    background: #fff;
}
table {
    width: 1209px;
    table-layout: fixed;
    border-collapse: separate;
    border-spacing: 0;
    line-height: 9px;
}
.c-row { width: 8px; }
.c-ae { width: 53px; }
.c-ag { width: 70px; }
.c-ai { width: 283px; }
.c-aj { width: 81px; }
.c-ak { width: 92px; }
.c-al { width: 55px; }
.c-am { width: 69px; }
.c-an { width: 93px; }
.c-ao { width: 56px; }
.c-ap { width: 76px; }
.c-aq { width: 150px; }
th {
    padding: 0;
    background: #e6e6e6;
    border-right: 1px solid #c0c0c0;
    font-weight: normal;
    vertical-align: bottom;
}
tbody th {
    text-align: left;
    text-indent: -2px;
    border-bottom: 1px solid #c0c0c0;
}
td {
    padding: 0;
    border-right: 1px solid #555;
    border-bottom: 1px solid #444;
    color: #222;
    text-align: center;
    vertical-align: top;
}
.letters {
    height: 12px;
}
.letters th {
    padding-bottom: 1px;
}
.corner {
    background: linear-gradient(135deg, #e6e6e6 60%, #b0b0b0 60%);
}
.r1 { height: 27px; }
.r2 { height: 30px; }
.r3 { height: 71px; }
.r4 { height: 127px; }
.r5 { height: 123px; }
.r6 { height: 89px; }
.r7 { height: 30px; }
.r3 td {
    padding-top: 1px;
}
.r5 th {
    border-right-color: #217346;
}
.r1 td, .r2 td {
    padding: 0 1px;
    color: #fff;
    vertical-align: middle;
    border-color: #111a24;
}
.r1 td {
    font-size: 11px;
}
.r2 td {
    padding-top: 1px;
    font-family: Lato, "Open Sans", sans-serif;
    font-weight: bold;
    line-height: 10px;
}
.r2 .top {
    padding-top: 0;
    vertical-align: top;
}
.dark {
    background: #222b35;
}
.slate {
    background: #333f4f;
}
.blue {
    background: #1f4e78;
}
.v-scroll {
    flex: none;
    display: flex;
    flex-direction: column;
    width: 11px;
    padding: 3px 0 0 3px;
}
.v-scroll button {
    height: 9px;
    background: #fff;
    border: 1px solid #c6c6c6;
}
.v-thumb {
    flex: 1;
    margin-top: 1px;
    background: #fff;
    border: 1px solid #d0d0d0;
}

.cover {
    position: absolute;
    display: flex;
    align-items: center;
    justify-content: center;
    background: #fff;
    border: 1px solid #000;
}
.cover span {
    writing-mode: vertical-rl;
    transform: rotate(180deg);
    color: #e30d0d;
    -webkit-text-stroke: 1px #e30d0d;
    font-size: 41px;
    line-height: 50px;
}
.cover-ag {
    left: 113px;
    top: 69px;
    width: 68px;
    height: 430px;
}
.cover-ai {
    left: 244px;
    top: 71px;
    width: 289px;
    height: 426px;
    padding-left: 6px;
}
.cover-ao {
    left: 915px;
    top: 70px;
    width: 69px;
    height: 431px;
}
.cover-aq {
    left: 1051px;
    top: 70px;
    width: 143px;
    height: 410px;
}

/* sheet tabs and status bar */
footer {
    flex: none;
}
.sheet-tabs {
    display: flex;
    align-items: center;
    height: 19px;
    border-top: 1px solid #c6c6c6;
    border-bottom: 1px solid #d0d0d0;
}
.nav {
    width: 17px;
    color: #999;
}
.nav:first-child {
    margin-left: 3px;
}
.nav + .tab {
    margin-left: 17px;
}
.tab {
    width: 52px;
    height: 14px;
    border-left: 1px solid #aaa;
    font-size: 7px;
}
.tab.current {
    width: 64px;
    height: 16px;
    align-self: flex-start;
    background: linear-gradient(90deg, #fff 50%, #e6e6e6 50%);
    border-bottom: 1px solid #217346;
}
.add {
    margin-left: 20px;
}
.sheet-tabs .dots {
    margin-left: auto;
}
.h-scroll {
    display: flex;
    width: 452px;
    height: 9px;
    margin-right: 9px;
}
.h-scroll button {
    width: 9px;
    background: #fff;
    border: 1px solid #c6c6c6;
}
.h-track {
    flex: 1;
    padding-left: 162px;
    background: #dadada;
}
.h-thumb {
    width: 60px;
    height: 9px;
    background: #fff;
    border: 1px solid #c6c6c6;
}
.status-bar {
    display: flex;
    justify-content: flex-end;
    gap: 2px;
    height: 3px;
    padding-right: 99px;
    background: #f3f3f3;
}
.view {
    width: 22px;
    height: 3px;
    border: solid #f3f3f3;
    border-width: 1px 7px 0;
    background: #999;
}
.view.on {
    border-color: #c6c6c6;
    background: #777;
}
```
